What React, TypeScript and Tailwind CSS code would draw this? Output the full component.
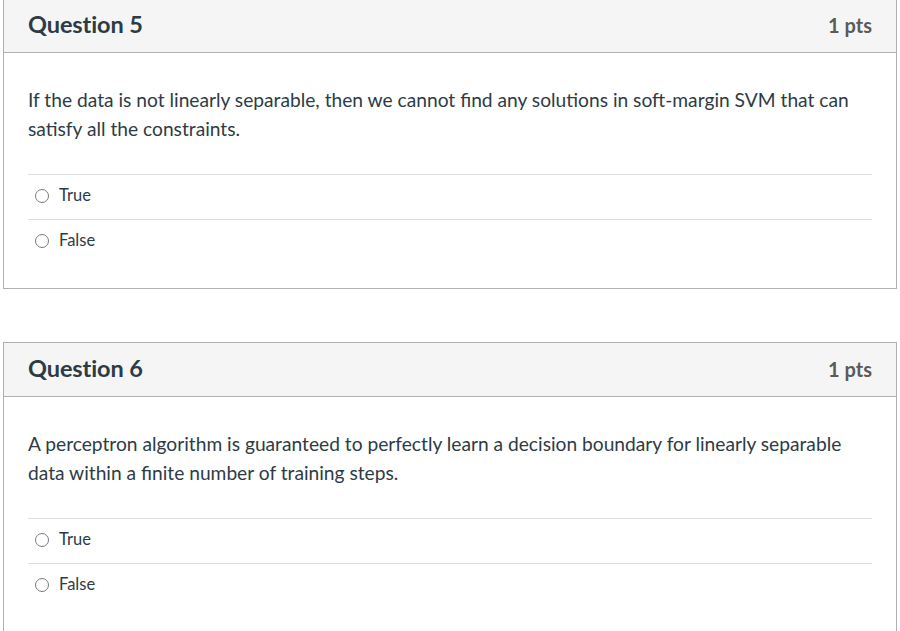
import React from "react";

function Radio() {
  return (
    <span className="inline-block w-[14px] h-[14px] rounded-full border border-[#7a7a7a] bg-white shrink-0" />
  );
}

function Option({ label }: { label: string }) {
  return (
    <div className="flex items-center h-[45px] border-t border-[#dcdcdc] pl-[7px] pb-[3px]">
      <Radio />
      <span className="ml-[10px] text-[16.5px] text-[#2d3b45]">{label}</span>
    </div>
  );
}

function Question({ n, text, first }: { n: number; text: string; first?: boolean }) {
  return (
    <div className={`mx-[3px] border border-[#b0b0b0] bg-white ${first ? "-mt-[2px]" : "mt-[53px]"}`}>
      <div className="flex items-center justify-between h-[54px] bg-[#f5f5f5] border-b border-[#b0b0b0] px-[24px] pb-[1px]">
        <h2 className="text-[23.5px] font-bold text-[#2d3b45] tracking-[-0.1px]">Question {n}</h2>
        <span className="text-[20px] font-bold text-[#5a5a5a]">1 pts</span>
      </div>
      <div className="px-[24px] pt-[32px] pb-[24px]">
        <p className="text-[19.2px] leading-[29px] text-[#2d3b45]">{text}</p>
        <div className="mt-[31px]">
          <Option label="True" />
          <Option label="False" />
        </div>
      </div>
    </div>
  );
}

export default function App() {
  return (
    <div className="w-[900px] h-[631px] overflow-hidden bg-white" style={{ fontFamily: "Lato, 'Open Sans', sans-serif" }}>
      <Question
        n={5}
        first
        text="If the data is not linearly separable, then we cannot find any solutions in soft-margin SVM that can satisfy all the constraints."
      />
      <Question
        n={6}
        text="A perceptron algorithm is guaranteed to perfectly learn a decision boundary for linearly separable data within a finite number of training steps."
      />
    </div>
  );
}
